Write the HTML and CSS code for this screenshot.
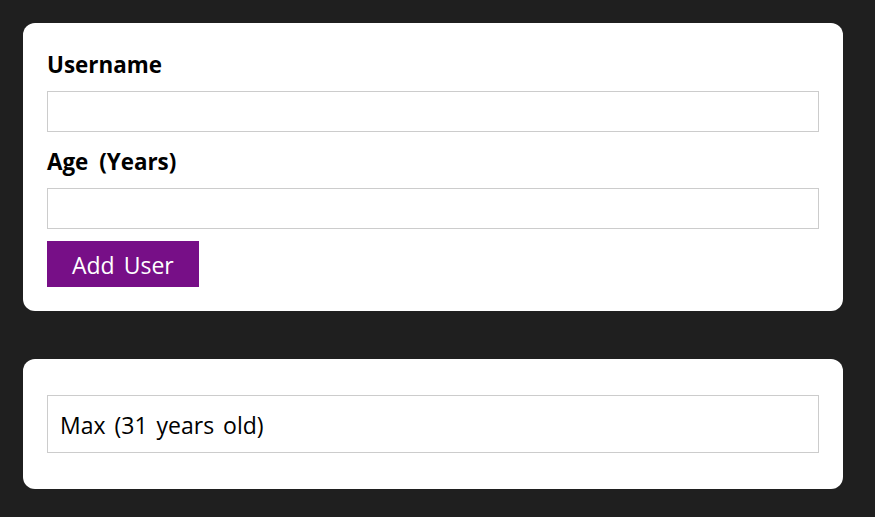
FILE: index.html
```html
<!DOCTYPE html>
<html>
<head>
<meta charset="utf-8">
<link rel="stylesheet" href="styles.css">
</head>
<body>
<main class="page">
  <section class="card form-card">
    <form class="user-form">
      <label class="field-label" for="username">Username</label>
      <input class="field-input" id="username" type="text">
      <label class="field-label" for="age">Age (Years)</label>
      <input class="field-input" id="age" type="number">
      <button class="button" type="button">Add User</button>
    </form>
  </section>
  <section class="card list-card">
    <ul class="user-list">
      <li class="user-item">Max (31 years old)</li>
    </ul>
  </section>
</main>
</body>
</html>
```
FILE: styles.css
```css
html, body {
  margin: 0;
  padding: 0;
  background: #1f1f1f;
}
body {
  font-family: "Open Sans", "Noto Sans CJK KR", sans-serif;
  font-size: 24px;
  line-height: 32px;
  color: #000;
}
.page {
  display: flex;
  flex-direction: column;
  gap: 48px;
  padding: 23px 0 0 23px;
}
.card {
  width: 820px;
  box-sizing: border-box;
  background: #fff;
  border-radius: 12px;
}
.form-card {
  padding: 24px;
}
.user-form {
  display: flex;
  flex-direction: column;
  align-items: flex-start;
  margin: 0;
}
.field-label {
  font-weight: bold;
  font-size: 22.4px;
  word-spacing: 5px;
  padding-top: 2px;
  margin-bottom: 10px;
}
.field-input {
  font: inherit;
  width: 100%;
  box-sizing: border-box;
  height: 41px;
  border: 1px solid #ccc;
  padding: 3px;
  margin: 0 0 12px 0;
  outline: none;
}
.button {
  font: inherit;
  font-size: 23px;
  word-spacing: 3px;
  height: 46px;
  border: 1px solid #770f87;
  background: #770f87;
  color: #fff;
  padding: 2px 24px 0;
  margin: 0;
}
.list-card {
  padding: 24px;
}
.user-list {
  list-style: none;
  margin: 0;
  padding: 0;
}
.user-item {
  border: 1px solid #ccc;
  margin: 12px 0;
  padding: 13px 12px 11px;
  font-size: 23px;
  word-spacing: 3px;
}
```
